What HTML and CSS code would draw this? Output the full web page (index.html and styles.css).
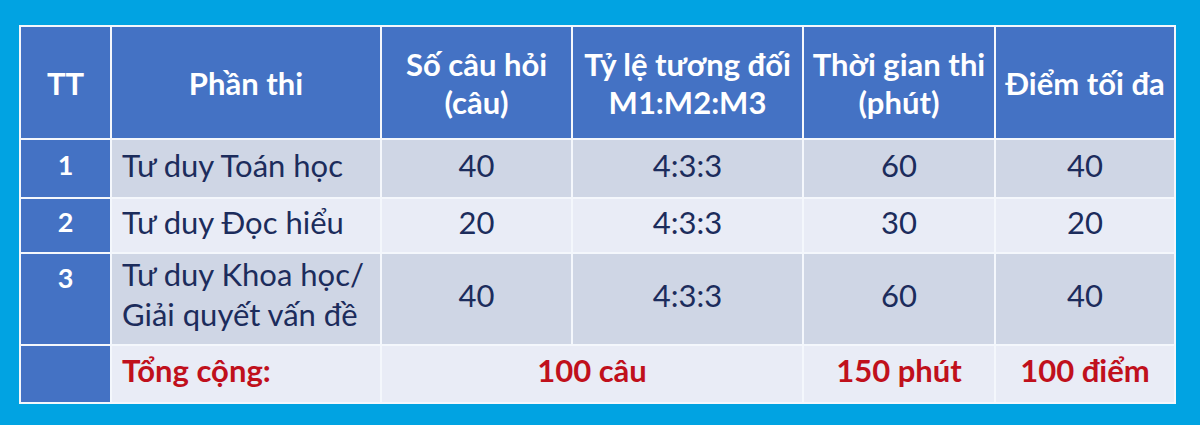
FILE: index.html
```html
<!DOCTYPE html>
<html lang="vi">
<head>
<meta charset="utf-8">
<title>Cấu trúc bài thi</title>
<link rel="stylesheet" href="styles.css">
</head>
<body>
<div class="frame">
  <table class="exam">
    <colgroup>
      <col class="c-tt">
      <col class="c-part">
      <col class="c-num">
      <col class="c-ratio">
      <col class="c-time">
      <col class="c-score">
    </colgroup>
    <thead>
      <tr class="r-head">
        <th>TT</th>
        <th>Phần thi</th>
        <th>Số câu hỏi<br>(câu)</th>
        <th>Tỷ lệ tương đối<br>M1:M2:M3</th>
        <th>Thời gian thi<br>(phút)</th>
        <th>Điểm tối đa</th>
      </tr>
    </thead>
    <tbody>
      <tr class="r-1 dark">
        <td class="tt">1</td>
        <td class="part">Tư duy Toán học</td>
        <td>40</td>
        <td>4:3:3</td>
        <td>60</td>
        <td>40</td>
      </tr>
      <tr class="r-2 light">
        <td class="tt">2</td>
        <td class="part">Tư duy Đọc hiểu</td>
        <td>20</td>
        <td>4:3:3</td>
        <td>30</td>
        <td>20</td>
      </tr>
      <tr class="r-3 dark">
        <td class="tt top">3</td>
        <td class="part top">Tư duy Khoa học/<br>Giải quyết vấn đề</td>
        <td>40</td>
        <td>4:3:3</td>
        <td>60</td>
        <td>40</td>
      </tr>
      <tr class="r-total light">
        <td class="tt"></td>
        <td class="part total">Tổng cộng:</td>
        <td class="total" colspan="2">100 câu</td>
        <td class="total">150 phút</td>
        <td class="total">100 điểm</td>
      </tr>
    </tbody>
  </table>
</div>
</body>
</html>
```

FILE: styles.css
```css
html, body {
  margin: 0;
  padding: 0;
}
body {
  background: #01a3e2;
  width: 1200px;
  height: 425px;
  overflow: hidden;
  font-family: Lato, "Liberation Sans", sans-serif;
}
.frame {
  padding: 25px 0 0 19px;
}
.exam {
  border-collapse: collapse;
  table-layout: fixed;
  width: 1157px;
  border: 2px solid #dfeefa;
}
.c-tt { width: 91px; }
.c-part { width: 270px; }
.c-num { width: 191px; }
.c-ratio { width: 231px; }
.c-time { width: 192px; }
.c-score { width: 180px; }

.exam th,
.exam td {
  border: 2px solid #f4f7fc;
  padding: 0;
  text-align: center;
  vertical-align: middle;
}
.exam th {
  background: #4472c4;
  color: #ffffff;
  font-weight: 700;
  font-size: 31px;
  line-height: 38px;
}
.r-head { height: 113px; }
.r-1 { height: 59px; }
.r-2 { height: 55px; }
.r-3 { height: 92px; }
.r-total { height: 58px; }

.exam td {
  font-size: 31px;
  line-height: 40px;
  color: #1c2c5c;
  padding-bottom: 8px;
}
.dark td { background: #cfd6e5; }
.light td { background: #e9ecf6; }

.exam td.tt {
  background: #4472c4;
  color: #ffffff;
  font-weight: 700;
  font-size: 27px;
}
.exam td.top {
  vertical-align: top;
  padding-top: 0;
  padding-bottom: 0;
}
.exam td.tt.top {
  padding-top: 4px;
}
.exam td.part {
  text-align: left;
  padding-left: 10px;
}
.exam td.total {
  color: #c0101c;
  font-weight: 700;
}
```
